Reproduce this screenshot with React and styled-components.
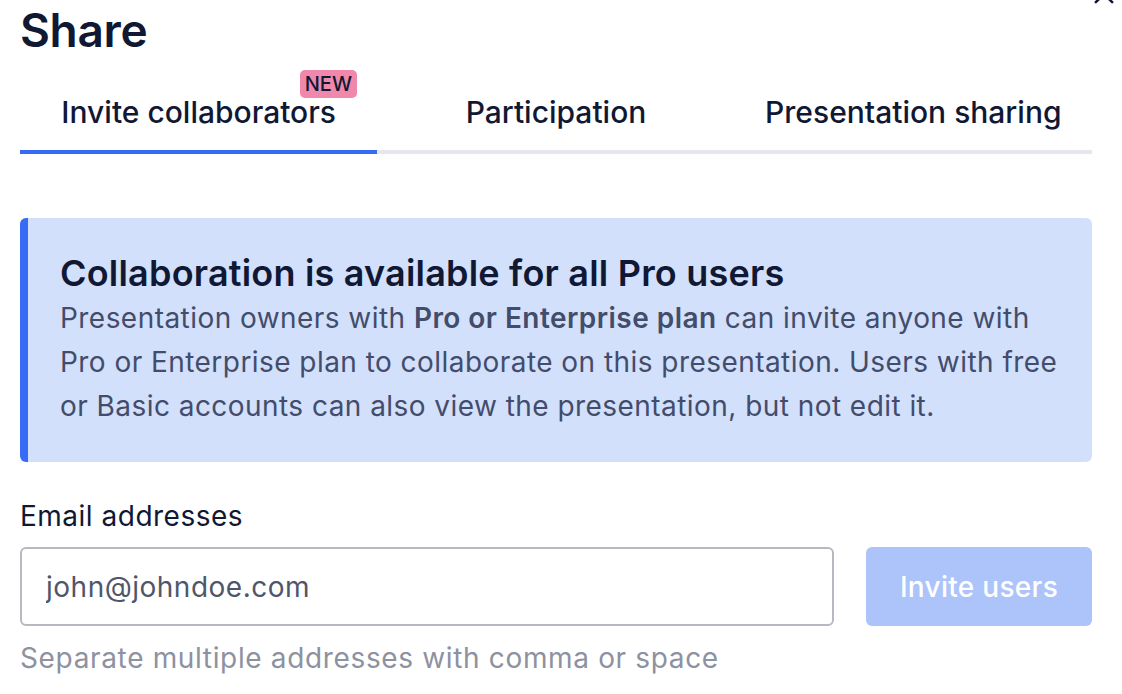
import React from 'react'
import styled, { createGlobalStyle } from 'styled-components'

const GlobalStyle = createGlobalStyle`
  body {
    margin: 0;
    background: #fff;
    font-family: Inter, "Noto Sans", sans-serif;
    color: #101834;
    overflow: hidden;
  }
`

const Modal = styled.div`
  position: relative;
  width: 1072px;
  padding: 0 30px 0 20px;
`

const CloseButton = styled.button`
  position: absolute;
  top: -20px;
  right: 4px;
  width: 28px;
  height: 28px;
  padding: 0;
  border: 0;
  background: none;
  color: #101834;
`

const Title = styled.h1`
  margin: 0;
  padding-top: 6px;
  font-size: 46px;
  line-height: 48px;
  font-weight: 600;
  letter-spacing: -0.3px;
`

const TabRow = styled.div`
  display: grid;
  grid-template-columns: repeat(3, 1fr);
  margin-top: 34px;
`

const Tab = styled.div`
  display: flex;
  justify-content: center;
  align-items: flex-start;
  height: 66px;
  padding-top: 6px;
  box-sizing: border-box;
  border-bottom: 4px solid ${p => (p.$active ? '#356bf5' : '#e6e7eb')};
  font-size: 30px;
  line-height: 36px;
  font-weight: 500;
`

const TabLabel = styled.span`
  position: relative;
`

const Badge = styled.span`
  position: absolute;
  top: -24px;
  right: -21px;
  padding: 2px 5px;
  border-radius: 5px;
  background: #ef88aa;
  color: #101834;
  font-size: 20px;
  line-height: 24px;
  font-weight: 500;
`

const InfoBox = styled.div`
  margin-top: 64px;
  height: 244px;
  box-sizing: border-box;
  padding: 32px 24px 0 32px;
  border-left: 8px solid #356bf5;
  border-radius: 6px;
  background: #d2e0fb;
`

const InfoHeading = styled.h2`
  margin: 0;
  font-size: 36px;
  line-height: 46px;
  font-weight: 600;
  letter-spacing: 0.2px;
  color: #101834;
`

const InfoText = styled.p`
  margin: 0;
  font-size: 28px;
  line-height: 44px;
  letter-spacing: 0.45px;
  color: #434c6b;

  strong {
    font-weight: 600;
  }
`

const Label = styled.div`
  margin-top: 36px;
  font-size: 28px;
  line-height: 36px;
  letter-spacing: 0.5px;
  color: #101834;
`

const InviteRow = styled.div`
  display: flex;
  gap: 32px;
  margin-top: 13px;
`

const EmailInput = styled.input`
  flex: 1;
  height: 79px;
  box-sizing: border-box;
  padding: 0 24px;
  border: 2px solid #b6b9bf;
  border-radius: 6px;
  font-family: inherit;
  font-size: 28px;
  letter-spacing: 0.5px;
  color: #101834;
  &::placeholder {
    color: #50566a;
  }
`

const InviteButton = styled.button`
  width: 226px;
  height: 79px;
  border: 0;
  border-radius: 6px;
  background: #adc4fa;
  color: #fff;
  font-family: inherit;
  font-size: 28px;
  font-weight: 500;
  letter-spacing: 0.3px;
`

const Hint = styled.div`
  margin-top: 14px;
  font-size: 28px;
  line-height: 36px;
  letter-spacing: 0.65px;
  color: #8d91a0;
`

export default function App() {
  return (
    <>
      <GlobalStyle />
      <Modal>
        <CloseButton aria-label="Close">
          <svg width="28" height="28" viewBox="0 0 24 24" fill="none" stroke="currentColor" strokeWidth="2.2" strokeLinecap="round">
            <path d="M5 5l14 14M19 5L5 19" />
          </svg>
        </CloseButton>
        <Title>Share</Title>
        <TabRow>
          <Tab $active>
            <TabLabel>
              Invite collaborators
              <Badge>NEW</Badge>
            </TabLabel>
          </Tab>
          <Tab>
            <TabLabel>Participation</TabLabel>
          </Tab>
          <Tab>
            <TabLabel>Presentation sharing</TabLabel>
          </Tab>
        </TabRow>
        <InfoBox>
          <InfoHeading>Collaboration is available for all Pro users</InfoHeading>
          <InfoText>
            Presentation owners with <strong>Pro or Enterprise plan</strong> can invite anyone with
            <br />
            Pro or Enterprise plan to collaborate on this presentation. Users with free
            <br />
            or Basic accounts can also view the presentation, but not edit it.
          </InfoText>
        </InfoBox>
        <Label>Email addresses</Label>
        <InviteRow>
          <EmailInput placeholder="john@johndoe.com" />
          <InviteButton disabled>Invite users</InviteButton>
        </InviteRow>
        <Hint>Separate multiple addresses with comma or space</Hint>
      </Modal>
    </>
  )
}
